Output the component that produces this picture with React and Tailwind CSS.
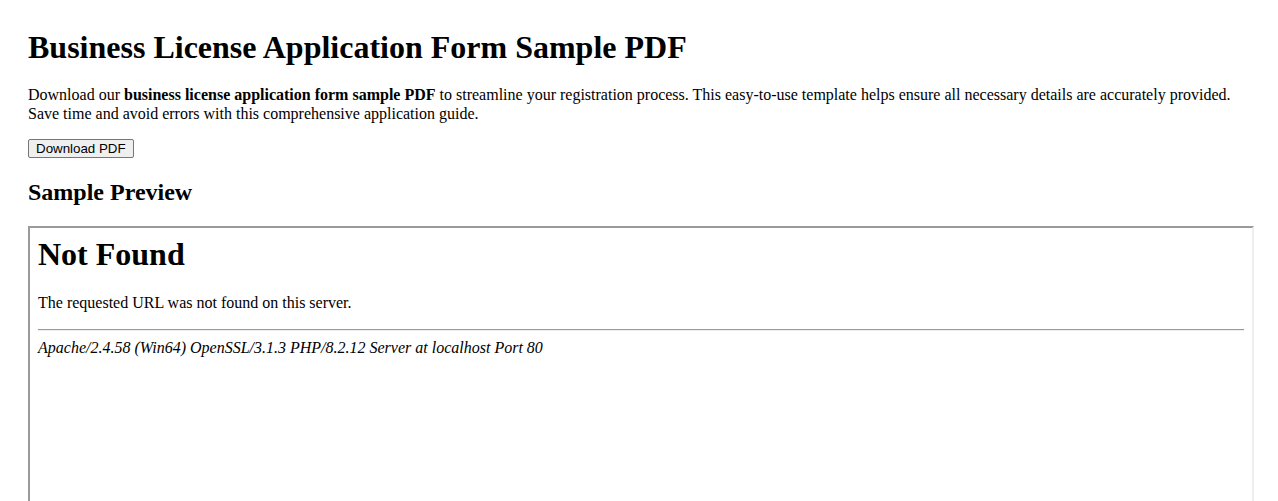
import React from 'react';

export default function App() {
    return (
        <div className="h-[501px] overflow-hidden bg-white text-black font-['Liberation_Serif',serif]">
            <div className="pt-[29px] px-[28px]">
                <h1 className="text-[32px] font-bold leading-[36.8px] mb-[20.5px]">Business License Application Form Sample PDF</h1>
                <p className="text-[16px] leading-[18.4px] mb-[16px]">
                    Download our <strong>business license application form sample PDF</strong> to streamline your registration process. This easy-to-use template helps ensure all necessary details are accurately provided. Save time and avoid errors with this comprehensive application guide.
                </p>
                <button className="block font-['Liberation_Sans',Arial,sans-serif] text-[13.333px] leading-[15.3px] px-[7px] py-[1px] bg-[#efefef] border border-[#767676] rounded-[2px]">
                    Download PDF
                </button>
                <h2 className="text-[24px] font-bold leading-[27.6px] mt-[20.9px] mb-[19px]">Sample Preview</h2>

                <div className="w-[1226px] h-[600px] border-2 border-t-[#9a9a9a] border-l-[#9a9a9a] border-r-[#eeeeee] border-b-[#eeeeee] overflow-hidden">
                    <div className="p-[8px]">
                        <h1 className="text-[32px] font-bold leading-[36.8px] mb-[21.44px]">Not Found</h1>
                        <p className="text-[16px] leading-[18.4px] mb-[16px]">The requested URL was not found on this server.</p>
                        <hr className="border-t border-b border-t-[#9a9a9a] border-b-[#eeeeee] my-[8px]" />
                        <address className="italic text-[16px] leading-[18.4px]">Apache/2.4.58 (Win64) OpenSSL/3.1.3 PHP/8.2.12 Server at localhost Port 80</address>
                    </div>
                </div>
            </div>
        </div>
    );
}
